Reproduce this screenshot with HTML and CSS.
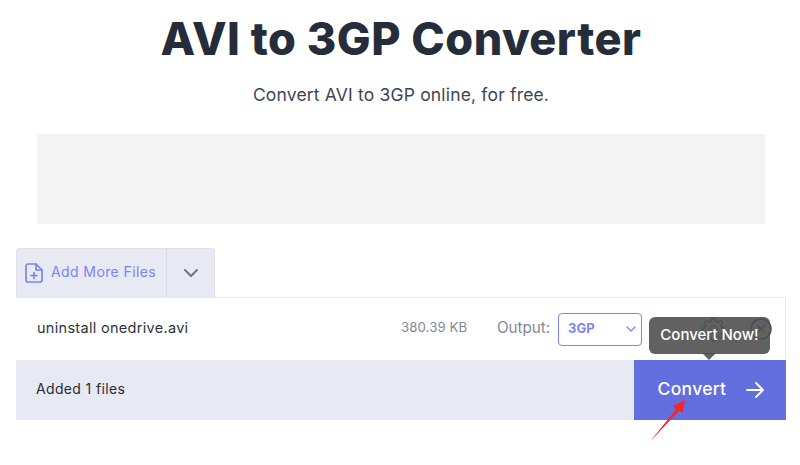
FILE: index.html
```html
<!DOCTYPE html>
<html lang="en">
<head>
<meta charset="utf-8">
<title>AVI to 3GP Converter</title>
<link rel="stylesheet" href="styles.css">
</head>
<body>
<main class="page">
  <header class="hero">
    <h1 class="title">AVI to 3GP Converter</h1>
    <p class="subtitle">Convert AVI to 3GP online, for free.</p>
  </header>
  <div class="ad"></div>
  <section class="tool">
    <div class="tabs">
      <div class="add">
        <svg class="file-icon" viewBox="0 0 18 20" width="18" height="20" fill="none" stroke="#7c84f5" stroke-width="1.7" stroke-linejoin="round" stroke-linecap="round"><path d="M3 1h8l6 6v10a2 2 0 0 1-2 2h-12a2 2 0 0 1-2-2v-14a2 2 0 0 1 2-2z"/><path d="M11 1v6h6"/><path d="M9 9.500v6M6 12.500h6"/></svg>
        <span class="add-label">Add More Files</span>
      </div>
      <div class="drop">
        <svg viewBox="0 0 16 10" width="16" height="10" fill="none" stroke="#6b7588" stroke-width="2" stroke-linecap="round" stroke-linejoin="round"><path d="M2 2l6 6 6-6"/></svg>
      </div>
    </div>
    <div class="row">
      <span class="name">uninstall onedrive.avi</span>
      <span class="size">380.39 KB</span>
      <span class="output">Output:</span>
      <div class="select"><span class="select-value">3GP</span>
        <svg viewBox="0 0 10 6" width="10" height="6" fill="none" stroke="#7c84f5" stroke-width="1.300" stroke-linecap="round" stroke-linejoin="round"><path d="M1 1l4 4 4-4"/></svg>
      </div>
      <svg class="gear" viewBox="0 0 24 24" width="25" height="25" fill="none" stroke="#4a5160" stroke-width="1.400" stroke-linejoin="round"><circle cx="12" cy="12" r="3.500"/><path d="M19.400 15a1.650 1.650 0 0 0 .33 1.820l.06.06a2 2 0 0 1 0 2.830 2 2 0 0 1-2.830 0l-.06-.06a1.650 1.650 0 0 0-1.820-.33 1.650 1.650 0 0 0-1 1.510V21a2 2 0 0 1-2 2 2 2 0 0 1-2-2v-.09A1.650 1.650 0 0 0 9 19.400a1.650 1.650 0 0 0-1.820.33l-.06.06a2 2 0 0 1-2.830 0 2 2 0 0 1 0-2.830l.06-.06a1.650 1.650 0 0 0 .33-1.820 1.650 1.650 0 0 0-1.510-1H3a2 2 0 0 1-2-2 2 2 0 0 1 2-2h.09A1.650 1.650 0 0 0 4.600 9a1.650 1.650 0 0 0-.33-1.820l-.06-.06a2 2 0 0 1 0-2.830 2 2 0 0 1 2.830 0l.06.06a1.650 1.650 0 0 0 1.820.33H9a1.650 1.650 0 0 0 1-1.510V3a2 2 0 0 1 2-2 2 2 0 0 1 2 2v.09a1.650 1.650 0 0 0 1 1.510 1.650 1.650 0 0 0 1.820-.33l.06-.06a2 2 0 0 1 2.830 0 2 2 0 0 1 0 2.830l-.06.06a1.650 1.650 0 0 0-.33 1.820V9a1.650 1.650 0 0 0 1.510 1H21a2 2 0 0 1 2 2 2 2 0 0 1-2 2h-.09a1.650 1.650 0 0 0-1.510 1z"/></svg>
      <svg class="close" viewBox="0 0 22 22" width="22" height="22" fill="none" stroke="#4a5160" stroke-width="1.600" stroke-linecap="round"><circle cx="11" cy="11" r="10"/><path d="M7.500 7.500l7 7M14.500 7.500l-7 7"/></svg>
      <div class="tooltip">Convert Now!</div>
    </div>
    <div class="footer">
      <span class="count">Added 1 files</span>
      <button class="convert" type="button">
        <span class="convert-label">Convert</span>
        <svg viewBox="0 0 18 16" width="18" height="16" fill="none" stroke="#fff" stroke-width="1.800" stroke-linecap="round" stroke-linejoin="round"><path d="M1 8h16M10 1l7 7-7 7"/></svg>
      </button>
      <svg class="pointer" viewBox="0 0 40 50" width="40" height="50"><path d="M0 44.500L26 12.500 22.700 9 35 3 32.700 16 29.500 13.500z" fill="#f0282a"/></svg>
    </div>
  </section>
</main>
</body>
</html>
```
FILE: styles.css
```css
* { box-sizing: border-box; }
html, body { margin: 0; padding: 0; background: #fff; }
body { width: 800px; height: 465px; overflow: hidden; font-family: "Inter", "Liberation Sans", sans-serif; color: #262d3a; }
.page { padding: 0 14px 0 16px; }
.hero { text-align: center; padding-top: 14px; }
.title { margin: 0; font-size: 45px; line-height: 50px; font-weight: 800; letter-spacing: .5px; color: #262d3a; }
.subtitle { margin: 20px 0 0; font-size: 17.500px; line-height: 22px; font-weight: 400; letter-spacing: .17px; color: #3d4554; }
.ad { margin: 28px 21px 24px; height: 90px; background: #f3f3f3; }
.tool { width: 770px; }
.tabs { display: flex; width: 199px; height: 49px; background: #e7eaf2; border: 1px solid #dfe2ea; border-bottom: 0; border-radius: 4px 4px 0 0; }
.add { display: flex; align-items: center; gap: 8px; width: 150px; padding-left: 8px; border-right: 1px solid #d9dce5; }
.add-label { padding-bottom: 4px; font-size: 14px; letter-spacing: .4px; color: #7c84f5; white-space: nowrap; }
.drop { flex: 1; display: flex; align-items: center; justify-content: center; }
.row { position: relative; display: flex; align-items: center; height: 63px; padding: 0 13px 0 21px; border-top: 1px solid #e9ebf1; border-right: 1px solid #e9ebf1; font-size: 14px; }
.name { flex: 1; padding-bottom: 3px; font-size: 14.500px; letter-spacing: .3px; color: #2c3340; }
.size { width: 96px; padding-bottom: 4px; font-size: 13.200px; color: #818896; letter-spacing: .1px; }
.output { width: 61px; padding-bottom: 4px; color: #818896; font-size: 15.200px; }
.select { display: flex; align-items: center; justify-content: space-between; width: 84px; height: 33px; padding: 0 5px 0 9px; border: 1px solid #7c84f5; border-radius: 4px; background: #fff; font-size: 13px; font-weight: 700; color: #7c84f5; }
.select-value { padding-bottom: 3px; }
.gear { margin-left: 59px; flex: none; }
.close { margin-left: 24px; flex: none; }
.tooltip { position: absolute; left: 633px; top: 19px; width: 121px; height: 37px; padding-bottom: 2px; display: flex; align-items: center; justify-content: center; background: rgba(80, 80, 80, .9); border-radius: 6px; color: #fff; font-size: 15px; font-weight: 500; }
.tooltip::after { content: ""; position: absolute; left: 53px; bottom: -6px; border: 7px solid transparent; border-top-color: rgba(80, 80, 80, .9); border-bottom: 0; }
.footer { position: relative; display: flex; align-items: center; justify-content: space-between; height: 60px; background: #e7eaf2; padding-left: 20px; }
.count { padding-bottom: 4px; font-size: 14px; color: #262d3a; letter-spacing: .35px; }
.convert { display: flex; align-items: center; justify-content: center; gap: 20px; width: 152px; height: 60px; border: 0; background: #646fdf; color: #fff; font-family: inherit; font-size: 17.500px; font-weight: 500; letter-spacing: .3px; padding: 0 0 0 2px; }
.convert-label { padding-bottom: 4px; }
.pointer { position: absolute; left: 634px; top: 37px; }
```
